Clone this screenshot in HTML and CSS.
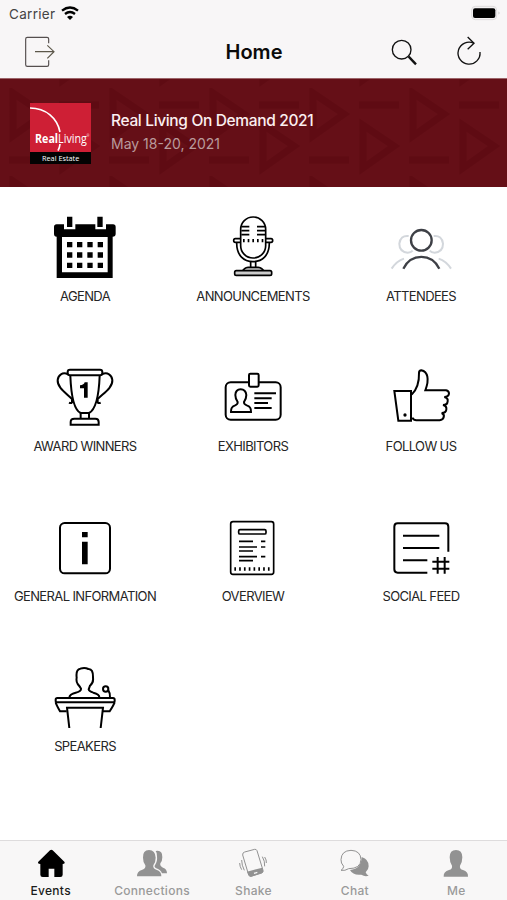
FILE: index.html
```html
<!DOCTYPE html>
<html lang="en">
<head>
<meta charset="utf-8">
<title>Home</title>
<link rel="stylesheet" href="styles.css">
</head>
<body>
<div class="app">
  <header class="top">
    <div class="status">
      <span class="carrier">Carrier</span>
      <svg class="wifi" viewBox="186 15 54 44"><g fill="none" stroke="#000" stroke-width="7"><path d="M189 29Q213 10 237 29"/><path d="M198 39Q213 27 228 39"/></g><path d="M204 48Q213 41 222 48L213 57Z"/></svg>
      <svg class="battery" viewBox="651 15 93 48"><rect x="653" y="19" width="75" height="40" rx="11" fill="#f4f2f3" stroke="#dedcdd" stroke-width="3"/><rect x="657" y="25" width="67" height="29" rx="6"/><path d="M734 34q5 5 0 10z" fill="#aaa"/></svg>
    </div>
    <nav class="nav">
      <svg class="exit" viewBox="72 108 96 96" fill="none" stroke="#554f4f" stroke-width="3.5"><path d="M146 130V117q0-5-5-5H82q-5 0-5 5v77q0 5 5 5h59q5 0 5-5V181"/><path d="M105 155H162M142 136L162 155L142 175" stroke="#5c574a"/></svg>
      <h1 class="title">Home</h1>
      <svg class="search" viewBox="408 108 96 96" fill="none" stroke="#111"><circle cx="443" cy="149" r="28" stroke-width="4"/><path d="M464 170L486 193" stroke-width="7"/></svg>
      <svg class="reload" viewBox="600 108 96 96" fill="none" stroke="#111" stroke-width="4"><path d="M678 156A33 33 0 1 1 660 130"/><path d="M641 111L660 130L641 148"/></svg>
    </nav>
  </header>

  <section class="banner">
    <svg class="pattern" width="507" height="108">
      <defs><pattern id="play" x="7" y="9" width="100" height="88" patternUnits="userSpaceOnUse">
        <g fill="none" stroke="#5a0910" stroke-width="7">
          <path d="M6 5V48L37 26Z"/><path d="M2 72H42"/>
          <path d="M52 17H92"/><path d="M56 37V80L87 58Z"/>
        </g>
      </pattern></defs>
      <rect width="507" height="108" fill="url(#play)"/>
    </svg>
    <svg class="logo" viewBox="90 81 183 183">
      <rect x="90" y="81" width="183" height="147" fill="#ce1f35"/>
      <rect x="90" y="228" width="183" height="36" fill="#030303"/>
      <path d="M90 96C138 96 172 127 180 168M180 204Q179 215 174 224" fill="none" stroke="#fff" stroke-width="5"/>
      <text x="105" y="200" font-size="36" textLength="163" lengthAdjust="spacingAndGlyphs"><tspan font-weight="700">Real</tspan>Living<tspan font-size="10" dy="-17">®</tspan></text>
      <text x="126" y="255" font-size="24" textLength="112" lengthAdjust="spacingAndGlyphs">Real Estate</text>
    </svg>
    <div class="event">
      <div class="event-name">Real Living On Demand 2021</div>
      <div class="event-date">May 18-20, 2021</div>
    </div>
  </section>

  <main class="grid">
    <a class="tile">
      <svg viewBox="159 45 192 192"><path d="M170 73h22v15h34V73h60v15h32V73h21q8 0 8 8v20q0 9-9 9v124H170V110q-8 0-8-9V81q0-8 8-8zM186 111V217H323V111Z" fill-rule="evenodd"/><path d="M201 50h16v31h-16zM292 50h16v31h-16z"/><path d="M209 126V204M239 126V204M270 126V204M301 126V204" stroke="#000" stroke-width="16" stroke-dasharray="16 15"/></svg>
      <span class="label">AGENDA</span>
    </a>
    <a class="tile">
      <svg viewBox="3 45 192 192" fill="none" stroke="#000" stroke-width="5"><rect x="62" y="51" width="75" height="123" rx="37"/><path d="M64 80H88M64 92H88M64 104H88M111 80H135M111 92H135M111 104H135"/><path d="M69 122H132" stroke-width="10" stroke-dasharray="5 9"/><path d="M62 116H46q-5 0-5 5.500t5 5.500H62M137 116H153q5 0 5 5.500t-5 5.500H137"/><path d="M50 128C50 168 72 185 99 185S148 168 148 128"/><path d="M92 185V202M107 185V202"/><path d="M68 212L74 206Q78 202 84 202H115Q121 202 125 206L131 212" fill="#ccc"/><rect x="44" y="212" width="111" height="14" rx="5" fill="#ccc"/></svg>
      <span class="label">ANNOUNCEMENTS</span>
    </a>
    <a class="tile">
      <svg viewBox="507 45 192 192" fill="none"><g stroke="#d3d7dc" stroke-width="6"><path d="M566 108Q541 105 538 131Q538 155 563 158Q573 158 578 152M641 108Q666 105 669 131Q669 155 644 158Q634 158 629 152"/><path d="M515 206Q530 183 552 176M693 206Q678 183 656 176"/></g><g stroke="#3e4046" stroke-width="7"><circle cx="604" cy="121" r="31"/><path d="M550 206C574 159 634 159 658 206"/></g></svg>
      <span class="label">ATTENDEES</span>
    </a>

    <a class="tile">
      <svg viewBox="159 31 192 192" fill="none" stroke="#000" stroke-width="6"><rect x="203" y="45" width="104" height="17" rx="7"/><path d="M211 63C213 115 222 166 242 175H267C288 164 297 115 299 63"/><path d="M204 59C188 51 174 61 173 76C171 98 198 115 216 133V143Q213 147 207 144M306 59C322 51 336 61 337 76C339 98 311 115 293 133V143Q296 147 302 144"/><path d="M242 175V191M267 175V191M212 210V202Q212 192 223 192H286Q296 192 296 202V210Z"/><path d="M240 92Q252 91 254 83H263V129H252V101H240Z" fill="#000" stroke="none"/></svg>
      <span class="label">AWARD WINNERS</span>
    </a>
    <a class="tile">
      <svg viewBox="3 31 192 192" fill="none" stroke="#000" stroke-width="6"><rect x="17" y="83" width="165" height="112" rx="15"/><rect x="87" y="57" width="29" height="39" rx="4" fill="#fff"/><path d="M33 172Q32 157 44 153Q54 149 53 142Q46 132 46 121Q47 104 62 104T79 121Q79 132 72 142Q71 149 82 153Q94 157 93 172Z"/><path d="M103 116H168M103 131H155M103 145H144M103 160H155"/></svg>
      <span class="label">EXHIBITORS</span>
    </a>
    <a class="tile">
      <svg viewBox="507 31 192 192" fill="none" stroke="#000" stroke-width="6"><path d="M523 109H573V198H535Z"/><path d="M575 120C592 103 598 85 597 55Q597 47 604 47C623 51 629 73 616 107H678Q687 109 687 117Q686 126 673 127Q685 130 683 140Q682 151 669 151Q681 154 679 165Q678 175 665 175Q674 179 671 188Q669 196 659 197H589Q581 197 577 189"/><circle cx="555" cy="181" r="5" fill="#000" stroke="none"/></svg>
      <span class="label">FOLLOW US</span>
    </a>

    <a class="tile">
      <svg viewBox="159 32 192 192"><rect x="180" y="53" width="150" height="151" rx="14" fill="none" stroke="#000" stroke-width="6"/><path d="M246 80h17v16h-17zM246 109h17v68h-17z"/></svg>
      <span class="label">GENERAL INFORMATION</span>
    </a>
    <a class="tile">
      <svg viewBox="3 32 192 192" fill="none" stroke="#000" stroke-width="5"><rect x="32" y="49" width="129" height="158" rx="7"/><rect x="56" y="73" width="82" height="13" rx="4"/><path d="M57 108H99M57 125H111M57 137H99M57 154H111M57 166H99M123 108H136M123 125H136M123 154H136"/><path d="M43 191H151" stroke-width="11" stroke-dasharray="5 9.400"/></svg>
      <span class="label">OVERVIEW</span>
    </a>
    <a class="tile">
      <svg viewBox="507 32 192 192" fill="none" stroke="#000" stroke-width="6"><path d="M685 139V64Q685 54 675 54H533Q523 54 523 64V192Q523 202 533 202H622"/><path d="M549 91H658M549 128H658M549 165H622"/><path d="M637 169H688M637 190H688M653 155V205M674 155V205"/></svg>
      <span class="label">SOCIAL FEED</span>
    </a>

    <a class="tile">
      <svg viewBox="159 33 192 192" fill="none" stroke="#000" stroke-width="6"><path d="M208 128Q209 117 227 113Q244 109 243 101Q240 95 233 87Q228 80 230 68Q227 43 241 41Q254 36 265 42Q280 41 279 69Q281 83 270 92L266 103Q267 109 280 113Q299 118 298 128"/><circle cx="317" cy="102" r="8"/><path d="M325 106Q331 114 330 128"/><rect x="167" y="129" width="177" height="13" rx="5"/><path d="M167 142Q169 150 180 169H200M344 142Q341 150 329 169H309"/><path d="M208 219L201 158H309L302 219"/></svg>
      <span class="label">SPEAKERS</span>
    </a>
  </main>

  <footer class="tabs">
    <a class="tab active">
      <svg viewBox="105 39 96 96"><path d="M150 46Q154 42 158 46L193 80Q197 86 188 87V119Q188 126 181 126H163V101H146V126H128Q121 126 121 119V87Q111 86 115 80Z"/></svg>
      <span class="tab-label">Events</span>
    </a>
    <a class="tab">
      <svg viewBox="410 39 96 96"><path d="M469 48Q490 44 489 67Q489 78 483 85Q481 94 491 98Q503 102 503 115H488Q485 105 469 99Q464 95 466 92Q475 80 473 64Q474 54 469 48Z"/><path d="M413 124Q412 109 429 104Q440 101 438 91Q431 82 431 68Q430 45 449 45T469 68Q469 82 462 91Q460 101 471 104Q487 109 486 124Z"/></svg>
      <span class="tab-label">Connections</span>
    </a>
    <a class="tab">
      <svg viewBox="713 39 96 96"><g fill="none" stroke="#929292" stroke-width="3"><path d="M736 51L766 43Q771 42 773 47L791 106Q792 112 787 114L755 124Q750 125 748 120L730 60Q729 53 736 51Z"/><path d="M727 75Q727 91 735 106M721 84Q721 94 727 104M789 65Q797 78 796 94M796 66Q802 75 801 84"/></g><path d="M743 110L789 98L792 109Q792 113 787 115L755 125Q750 125 748 120Z"/><path d="M764 115L774 112" stroke="#f7f7f7" stroke-width="4"/></svg>
      <span class="tab-label">Shake</span>
    </a>
    <a class="tab">
      <svg viewBox="1016 39 96 96"><path d="M1084 66Q1106 73 1105 94Q1105 104 1096 112Q1098 119 1105 122Q1094 126 1083 119Q1058 122 1049 105Q1083 102 1084 66Z"/><path d="M1022 106Q1030 101 1030 94Q1021 84 1022 74Q1023 47 1052 46Q1081 47 1082 74Q1081 101 1045 101Q1034 108 1022 106Z" fill="none" stroke="#929292" stroke-width="3"/></svg>
      <span class="tab-label">Chat</span>
    </a>
    <a class="tab">
      <svg viewBox="1321 39 96 96"><path d="M1332 125Q1331 110 1348 105Q1359 102 1357 92Q1350 82 1350 67Q1350 45 1369 45T1388 67Q1388 82 1381 92Q1379 102 1390 105Q1406 110 1405 125Z"/></svg>
      <span class="tab-label">Me</span>
    </a>
  </footer>
</div>
</body>
</html>
```
FILE: styles.css
```css
* { box-sizing: border-box; }

body {
  margin: 0;
  font-family: Inter, "Liberation Sans", sans-serif;
  background: #fff;
}

svg { display: block; flex: none; }

.app {
  display: flex;
  flex-direction: column;
  width: 507px;
  height: 900px;
  overflow: hidden;
}

.top { height: 79px; background: #f8f6f7; border-bottom: 1px solid #9c6469; }

.status {
  display: flex;
  align-items: center;
  height: 27px;
  padding: 0 5px 0 9px;
}
.carrier { font-size: 13.5px; letter-spacing: 0.3px; color: #454344; }
.wifi { width: 18px; height: 14.700px; margin-left: 6px; margin-top: -1px; }
.battery { width: 31px; height: 16px; margin-left: auto; margin-top: -1px; }

.nav {
  display: grid;
  grid-template-columns: 32px 1fr 32px 32px;
  align-items: center;
  height: 50px;
  padding: 0 21px 0 24px;
}
.exit, .search, .reload { width: 32px; height: 32px; }
.nav .search { margin-left: -32px; }
.title {
  margin: 0;
  padding-left: 30px;
  text-align: center;
  font-size: 20px;
  line-height: 24px;
  font-weight: 600;
  color: #0b0b0b;
}

.banner {
  position: relative;
  display: flex;
  align-items: center;
  height: 108px;
  padding: 0 30px;
  background: #650f17;
}
.pattern { position: absolute; inset: 0; opacity: 0.5; }
.logo { position: relative; width: 61px; height: 61px; }
.logo text { font-family: "Open Sans", sans-serif; fill: #fff; }
.event { position: relative; margin-left: 20px; padding-bottom: 2px; white-space: nowrap; }
.event-name { font-size: 15.500px; line-height: 23px; font-weight: 500; letter-spacing: -0.34px; color: #fbeff0; }
.event-date { font-size: 14px; line-height: 23px; color: #b99a9c; }

.grid {
  flex: 1;
  display: grid;
  grid-template-columns: repeat(3, 168px);
  grid-template-rows: repeat(4, 150.300px);
  padding: 28px 0 0 1px;
  min-height: 0;
}
.tile { display: flex; flex-direction: column; align-items: center; }
.tile svg { width: 64px; height: 64px; }
.label {
  margin-top: 8.500px;
  font-size: 13px;
  line-height: 16px;
  letter-spacing: -0.62px;
  color: #252525;
  white-space: nowrap;
}

.tabs {
  display: grid;
  grid-template-columns: repeat(5, 1fr);
  height: 60px;
  background: #f8f7f7;
  border-top: 1px solid #dedcdd;
}
.tab {
  display: flex;
  flex-direction: column;
  align-items: center;
  padding-top: 7px;
  color: #9a9a9a;
}
.tab svg { width: 32px; height: 32px; fill: #929292; }
.tab-label { margin-top: 3px; font-size: 12px; line-height: 15px; font-weight: 500; letter-spacing: 0.3px; }
.tab.active { color: #1c1c1c; }
.tab.active svg { fill: #000; }
```
